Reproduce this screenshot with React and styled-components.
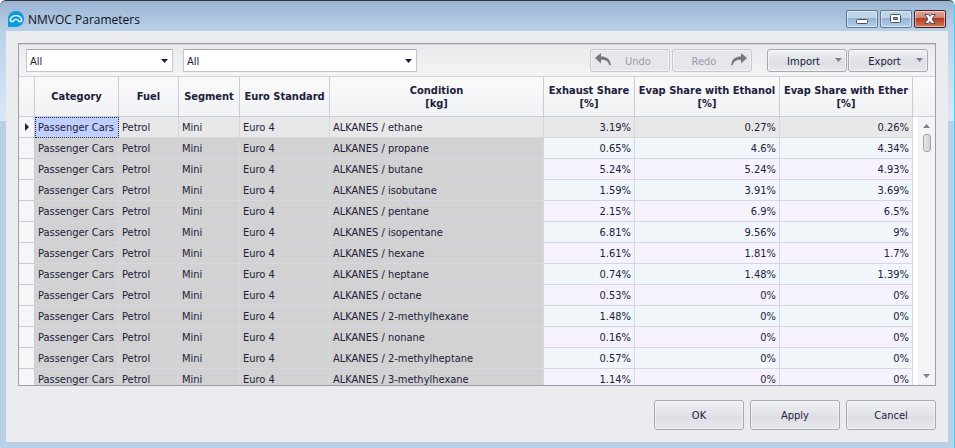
import React from 'react'
import styled, {createGlobalStyle, css} from 'styled-components'

const columns = [
  {key: 'category', label: 'Category', width: 84, group: true},
  {key: 'fuel', label: 'Fuel', width: 60, group: true},
  {key: 'segment', label: 'Segment', width: 61, group: true},
  {key: 'euro', label: 'Euro Standard', width: 90, group: true},
  {key: 'condition', label: 'Condition', unit: '[kg]', group: true},
  {key: 'exhaust', label: 'Exhaust Share', unit: '[%]', width: 91},
  {key: 'ethanol', label: 'Evap Share with Ethanol', unit: '[%]', width: 145},
  {key: 'ether', label: 'Evap Share with Ether', unit: '[%]', width: 133},
]

const rows = [
  ['ethane', '3.19%', '0.27%', '0.26%'],
  ['propane', '0.65%', '4.6%', '4.34%'],
  ['butane', '5.24%', '5.24%', '4.93%'],
  ['isobutane', '1.59%', '3.91%', '3.69%'],
  ['pentane', '2.15%', '6.9%', '6.5%'],
  ['isopentane', '6.81%', '9.56%', '9%'],
  ['hexane', '1.61%', '1.81%', '1.7%'],
  ['heptane', '0.74%', '1.48%', '1.39%'],
  ['octane', '0.53%', '0%', '0%'],
  ['2-methylhexane', '1.48%', '0%', '0%'],
  ['nonane', '0.16%', '0%', '0%'],
  ['2-methylheptane', '0.57%', '0%', '0%'],
  ['3-methylhexane', '1.14%', '0%', '0%'],
].map(([name, exhaust, ethanol, ether]) => ({
  category: 'Passenger Cars',
  fuel: 'Petrol',
  segment: 'Mini',
  euro: 'Euro 4',
  condition: `ALKANES / ${name}`,
  exhaust,
  ethanol,
  ether,
}))

const Filter = ({label, width}) => (
  <SelectBox $width={width}>
    <Select aria-label={label} defaultValue='All'>
      <option>All</option>
    </Select>
    <SelectArrow viewBox='0 0 7 4'>
      <path d='M0 0h7L3.5 4z' />
    </SelectArrow>
  </SelectBox>
)

const CurvedArrow = ({flip}) => (
  <ArrowIcon viewBox='0 0 16 14' $flip={flip}>
    <path d='M0 5 6 0v3.4c5.500 0 9.500 2.600 9.800 8.800h-1.600C13.400 8.600 10.800 6.800 6 6.800V10.500z' />
  </ArrowIcon>
)

const App = () => {
  return (
    <>
      <GlobalStyle />
      <Window>
        <TitleBar>
          <Logo viewBox='0 0 16 16'>
            <path d='M8 0a8 8 0 0 1 0 16H1a1 1 0 0 1-1-1V8a8 8 0 0 1 8-8z' fill='#0a9ade' />
            <path d='M5 10.500H3.400a1.400 1.400 0 0 1-.7-2.500C3.300 5.800 5.500 4.600 8 4.600s4.700 1.200 5.300 3.400a1.400 1.400 0 0 1-.7 2.500H11C10.500 9 9.500 8.300 8 8.300S5.500 9 5 10.500z' fill='none' stroke='#fff' strokeWidth='1.300' />
          </Logo>
          <Title>NMVOC Parameters</Title>
          <Captions>
            <CaptionButton aria-label='Minimize'>
              <CaptionIcon viewBox='0 0 12 12'>
                <rect x='.5' y='6.500' width='11' height='4' rx='1' fill='#fff' stroke='#4a4f5c' />
              </CaptionIcon>
            </CaptionButton>
            <CaptionButton aria-label='Maximize'>
              <CaptionIcon viewBox='0 0 12 12'>
                <rect x='.5' y='1.500' width='10' height='8' rx='1' fill='#fff' stroke='#4a4f5c' />
                <path d='M3.500 4.500h4v2h-4z' fill='#8fb0d0' stroke='#4a4f5c' />
              </CaptionIcon>
            </CaptionButton>
            <CaptionButton aria-label='Close' $close>
              <CaptionIcon viewBox='0 0 12 12'>
                <path d='M.8 1.500h3.600L6 3.400l1.600-1.900h3.600L8 6l3.200 4.500H7.600L6 8.600l-1.600 1.900H.8L4 6z' fill='#fff' stroke='#4a4f5c' />
              </CaptionIcon>
            </CaptionButton>
          </Captions>
        </TitleBar>
        <Client>
          <Panel>
            <Toolbar>
              <Filter label='Category filter' width={147} />
              <Filter label='Segment filter' width={234} />
              <Actions>
                <ButtonGroup $gap={2}>
                  <ToolButton disabled>
                    <CurvedArrow />
                    <ToolLabel>Undo</ToolLabel>
                  </ToolButton>
                  <ToolButton disabled>
                    <ToolLabel>Redo</ToolLabel>
                    <CurvedArrow flip />
                  </ToolButton>
                </ButtonGroup>
                <ButtonGroup $gap={1}>
                  <ToolButton>
                    <ToolLabel>Import</ToolLabel>
                    <MenuArrow viewBox='0 0 7 4'><path d='M0 0h7L3.5 4z' /></MenuArrow>
                  </ToolButton>
                  <ToolButton>
                    <ToolLabel>Export</ToolLabel>
                    <MenuArrow viewBox='0 0 7 4'><path d='M0 0h7L3.5 4z' /></MenuArrow>
                  </ToolButton>
                </ButtonGroup>
              </Actions>
            </Toolbar>
            <Grid>
              <Table>
                <colgroup>
                  <Col $width={16} />
                  {columns.map(c => <Col key={c.key} $width={c.width} />)}
                </colgroup>
                <thead>
                  <tr>
                    <HeadCell as='td' />
                    {columns.map(c => (
                      <HeadCell key={c.key} scope='col'>
                        {c.label}
                        {c.unit && <Unit>{c.unit}</Unit>}
                      </HeadCell>
                    ))}
                  </tr>
                </thead>
                <tbody>
                  {rows.map((row, i) => (
                    <tr key={row.condition}>
                      <Indicator>
                        {i === 0 && <Marker viewBox='0 0 4 8'><path d='M0 0l4 4-4 4z' /></Marker>}
                      </Indicator>
                      {columns.map((c, j) => (
                        <Cell
                          key={c.key}
                          $group={c.group}
                          $odd={i % 2 === 1}
                          $active={i === 0}
                          $focused={i === 0 && j === 0}
                        >
                          {row[c.key]}
                        </Cell>
                      ))}
                    </tr>
                  ))}
                </tbody>
              </Table>
              <Side>
                <Corner />
                <ScrollBar>
                  <ScrollArrow viewBox='0 0 7 4'><path d='M0 4h7L3.5 0z' /></ScrollArrow>
                  <Thumb />
                  <ScrollArrow viewBox='0 0 7 4'><path d='M0 0h7L3.5 4z' /></ScrollArrow>
                </ScrollBar>
              </Side>
            </Grid>
          </Panel>
          <Footer>
            <DialogButton>OK</DialogButton>
            <DialogButton>Apply</DialogButton>
            <DialogButton>Cancel</DialogButton>
          </Footer>
        </Client>
      </Window>
    </>
  )
}

const GlobalStyle = createGlobalStyle`
  * {
    box-sizing: border-box;
  }
  body {
    margin: 0;
    font-family: Tahoma, 'DejaVu Sans Condensed', 'DejaVu Sans', sans-serif;
    font-size: 11px;
    color: #20203a;
  }
  button, select {
    font: inherit;
    color: inherit;
  }
`
const Window = styled.div`
  display: flex;
  flex-direction: column;
  height: 100vh;
  padding: 0 6px 6px;
  border-top: 1px solid #35323a;
  border-right: 1px solid #35d6f2;
  border-radius: 6px 6px 0 0;
  background: linear-gradient(#9ab5d3 0, #b9d0e9 30px, #dbe8f5 120px, #bad0e9 120px);
`
const TitleBar = styled.div`
  display: flex;
  align-items: center;
  flex: none;
  height: 30px;
  padding: 6px 2px 0;
`
const Logo = styled.svg`
  width: 16px;
  height: 16px;
`
const Title = styled.div`
  flex: 1;
  margin-left: 4px;
  font-family: 'Segoe UI', 'Open Sans', sans-serif;
  font-size: 12px;
  color: #101018;
`
const Captions = styled.div`
  display: flex;
  gap: 2px;
`
const CaptionButton = styled.button`
  display: flex;
  align-items: center;
  justify-content: center;
  width: 32px;
  height: 18px;
  padding: 0;
  border: 1px solid #5f7590;
  border-radius: 2px;
  box-shadow: inset 0 0 0 1px rgba(255, 255, 255, 0.5);
  background: linear-gradient(#bfd3e7 0 45%, #94b2d0 45%, #b3cfe9);
  ${({$close}) => $close && css`
    border-color: #4d1a20;
    background: linear-gradient(#e0a79c 0, #d0806f 45%, #b43a22 45%, #cf7a5a);
  `}
`
const CaptionIcon = styled.svg`
  width: 12px;
  height: 12px;
`
const Client = styled.div`
  display: flex;
  flex-direction: column;
  flex: 1;
  min-height: 0;
  padding: 12px;
  background: #ebecef;
`
const Panel = styled.div`
  display: flex;
  flex-direction: column;
  flex: 1;
  min-height: 0;
  border: 1px solid #9c9caa;
`
const Toolbar = styled.div`
  display: flex;
  align-items: center;
  flex: none;
  gap: 10px;
  height: 33px;
  padding: 0 7px;
  border-bottom: 1px solid #cfd1d9;
  box-shadow: inset 0 1px #d3d4dc;
  background: linear-gradient(#e9eaed, #f4f4f4);
`
const SelectBox = styled.div`
  position: relative;
  width: ${({$width}) => $width}px;
`
const Select = styled.select`
  display: block;
  width: 100%;
  height: 23px;
  padding: 2px 20px 0 3px;
  border: 1px solid #c3c5d2;
  border-top-color: #a5a7b5;
  border-radius: 0;
  background: #fff;
  appearance: none;
`
const SelectArrow = styled.svg`
  position: absolute;
  top: 10px;
  right: 5px;
  width: 7px;
  height: 4px;
  fill: #20203a;
  pointer-events: none;
`
const Actions = styled.div`
  display: flex;
  gap: 15px;
  margin-left: auto;
`
const ButtonGroup = styled.div`
  display: flex;
  gap: ${({$gap}) => $gap}px;
`
const ToolButton = styled.button`
  display: flex;
  align-items: center;
  width: 80px;
  height: 23px;
  padding: 0 4px;
  border: 1px solid #a6a8b4;
  border-radius: 3px;
  box-shadow: inset 0 0 0 1px rgba(255, 255, 255, 0.5);
  background: linear-gradient(#f0f1f4, #dddfe5 60%, #e8e9ed);
  &:disabled {
    border-color: #c6c7cf;
    background: #e6e7eb;
    color: #9b9bac;
  }
`
const ToolLabel = styled.span`
  flex: 1;
  padding-top: 2px;
  text-align: center;
`
const ArrowIcon = styled.svg`
  width: 16px;
  height: 14px;
  fill: #777;
  transform: ${({$flip}) => $flip ? 'scaleX(-1)' : 'none'};
`
const MenuArrow = styled.svg`
  width: 7px;
  height: 4px;
  fill: #7f7f8c;
`
const Grid = styled.div`
  display: flex;
  flex: 1;
  min-height: 0;
  overflow: hidden;
  background: #fff;
`
const Table = styled.table`
  flex: 1;
  align-self: flex-start;
  min-width: 0;
  table-layout: fixed;
  border-collapse: separate;
  border-spacing: 0;
`
const Col = styled.col`
  width: ${({$width}) => $width ? `${$width}px` : 'auto'};
`
const HeadCell = styled.th`
  height: 40px;
  padding: 0;
  border-right: 1px solid #c9cbd6;
  border-bottom: 1px solid #c9cbd6;
  background: linear-gradient(#fafafb, #f1f2f4);
  line-height: 13px;
  white-space: nowrap;
`
const Unit = styled.div`
  line-height: 13px;
`
const cellColor = ({$focused, $active, $group, $odd}) => {
  if ($focused) return '#bfcfff'
  if ($active) return '#e8e8e8'
  if ($group) return '#d2d2d2'
  return $odd ? '#f1f6fb' : '#f7f3fd'
}
const Cell = styled.td`
  height: 21px;
  padding: 2px 3px 0;
  border-right: 1px solid #d5d7e2;
  border-bottom: 1px solid #d5d7e2;
  background: ${cellColor};
  line-height: 18px;
  text-align: ${({$group}) => $group ? 'left' : 'right'};
  white-space: nowrap;
  ${({$focused}) => $focused && css`
    outline: 1px dotted #20203a;
    outline-offset: -1px;
  `}
`
const Indicator = styled.td`
  padding: 0 0 0 6px;
  border-right: 1px solid #c9cbd6;
  border-bottom: 1px solid #c9cbd6;
  background: #f5f6f8;
  line-height: 0;
`
const Marker = styled.svg`
  width: 4px;
  height: 8px;
  fill: #20203a;
`
const Side = styled.div`
  display: flex;
  flex-direction: column;
  flex: none;
  width: 22px;
`
const Corner = styled.div`
  height: 40px;
  border-bottom: 1px solid #c9cbd6;
  background: linear-gradient(#fafafb, #f1f2f4);
`
const ScrollBar = styled.div`
  display: flex;
  flex-direction: column;
  align-items: center;
  flex: 1;
  margin-left: 5px;
  padding: 7px 0;
  background: #f4f4f6;
`
const Thumb = styled.div`
  width: 8px;
  height: 18px;
  margin: 6px 0 auto;
  border: 1px solid #a2a3ae;
  border-radius: 3px;
  background: linear-gradient(to right, #e6e7ea, #cfd0d6);
`
const ScrollArrow = styled.svg`
  flex: none;
  width: 7px;
  height: 4px;
  fill: #80808c;
`
const Footer = styled.div`
  display: flex;
  justify-content: flex-end;
  flex: none;
  gap: 6px;
  margin-top: 14px;
`
const DialogButton = styled.button`
  width: 90px;
  height: 30px;
  padding: 0;
  border: 1px solid #a6a8b4;
  border-radius: 3px;
  box-shadow: inset 0 0 0 1px rgba(255, 255, 255, 0.5);
  background: linear-gradient(#f0f1f4, #dddfe5 60%, #e8e9ed);
`

export default App
